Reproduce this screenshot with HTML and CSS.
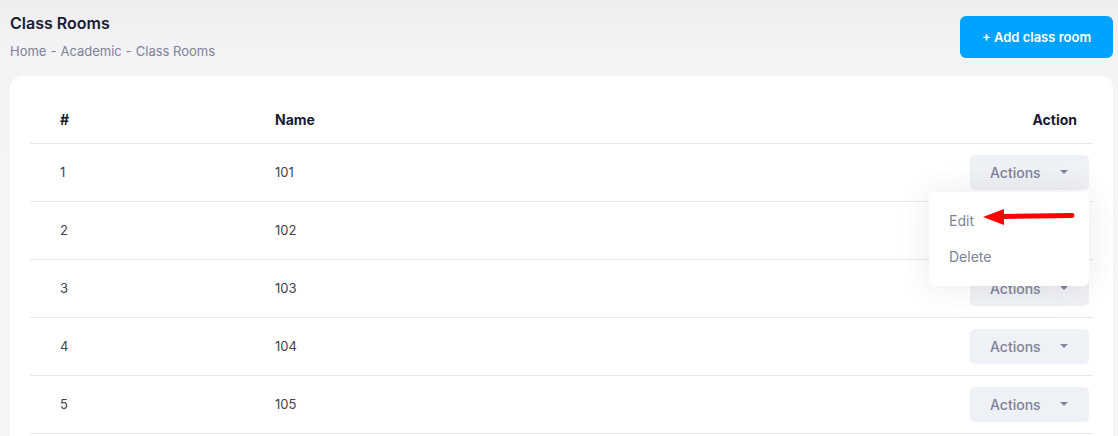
FILE: index.html
```html
<!DOCTYPE html>
<html lang="en">
<head>
<meta charset="utf-8">
<title>Class Rooms</title>
<link rel="stylesheet" href="styles.css">
</head>
<body>
<div class="page">
  <header class="toolbar">
    <div class="heading">
      <h1 class="title">Class Rooms</h1>
      <nav class="crumbs">
        <span>Home</span><span class="sep">-</span><span>Academic</span><span class="sep">-</span><span>Class Rooms</span>
      </nav>
    </div>
    <button class="btn-primary">+ Add class room</button>
  </header>

  <section class="card">
    <table class="grid">
      <thead>
        <tr>
          <th class="col-num">#</th>
          <th class="col-name">Name</th>
          <th class="col-action">Action</th>
        </tr>
      </thead>
      <tbody>
        <tr>
          <td class="col-num">1</td>
          <td class="col-name">101</td>
          <td class="col-action">
            <div class="dd open">
              <button class="btn-actions">Actions <span class="caret"></span></button>
              <div class="menu">
                <div class="menu-item">Edit</div>
                <div class="menu-item">Delete</div>
                <svg class="pointer" width="94" height="18" viewBox="0 0 94 18">
                  <path d="M0 9 L21 1 L21 17 Z" fill="#ff0000"/>
                  <line x1="18" y1="8.5" x2="89" y2="7.5" stroke="#ff0000" stroke-width="5" stroke-linecap="round"/>
                </svg>
              </div>
            </div>
          </td>
        </tr>
        <tr>
          <td class="col-num">2</td>
          <td class="col-name">102</td>
          <td class="col-action"><div class="dd"><button class="btn-actions">Actions <span class="caret"></span></button></div></td>
        </tr>
        <tr>
          <td class="col-num">3</td>
          <td class="col-name">103</td>
          <td class="col-action"><div class="dd"><button class="btn-actions">Actions <span class="caret"></span></button></div></td>
        </tr>
        <tr>
          <td class="col-num">4</td>
          <td class="col-name">104</td>
          <td class="col-action"><div class="dd"><button class="btn-actions">Actions <span class="caret"></span></button></div></td>
        </tr>
        <tr>
          <td class="col-num">5</td>
          <td class="col-name">105</td>
          <td class="col-action"><div class="dd"><button class="btn-actions">Actions <span class="caret"></span></button></div></td>
        </tr>
      </tbody>
    </table>
  </section>
</div>
</body>
</html>
```

FILE: styles.css
```css
* { box-sizing: border-box; }

html, body {
  margin: 0;
  height: 100%;
}

body {
  background: linear-gradient(180deg, #eeeef1 0%, #f4f4f6 60px, #f5f5f8 100%);
  font-family: "Inter", "Open Sans", "DejaVu Sans", sans-serif;
  color: #3f4254;
  overflow: hidden;
}

.page {
  padding: 0 5px 0 10px;
}

.toolbar {
  display: flex;
  justify-content: space-between;
  align-items: flex-start;
  height: 76px;
  padding-top: 12px;
}

.title {
  margin: 0;
  font-size: 16px;
  font-weight: 600;
  line-height: 22px;
  color: #181c32;
}

.crumbs {
  margin-top: 9px;
  font-size: 13px;
  font-weight: 400;
  line-height: 16px;
  color: #7e8299;
  display: flex;
  gap: 4px;
}

.btn-primary {
  margin-top: 4px;
  width: 153px;
  height: 42px;
  border: 0;
  border-radius: 6px;
  background: #00a3ff;
  color: #fff;
  font-family: inherit;
  font-size: 13px;
  font-weight: 600;
  padding: 0;
}

.card {
  background: #fff;
  border-radius: 12px 12px 0 0;
  padding: 20px 20px 0 20px;
  height: 360px;
  overflow: visible;
}

.grid {
  width: 100%;
  border-collapse: collapse;
}

.grid th {
  height: 47px;
  font-size: 14px;
  font-weight: 700;
  color: #181c32;
  text-align: left;
  vertical-align: middle;
  border-bottom: 1px solid #e6e7ec;
}

.grid td {
  height: 58px;
  font-size: 13px;
  color: #3f4254;
  vertical-align: middle;
  border-bottom: 1px solid #e6e7ec;
}

.col-num { padding-left: 30px; width: 245px; }
.col-name { padding-left: 0; }
.grid th.col-action { text-align: right; padding-right: 16px; }
.grid td.col-action { text-align: right; padding-right: 4px; }

.dd {
  position: relative;
  display: inline-block;
}

.btn-actions {
  display: flex;
  align-items: center;
  width: 119px;
  height: 35px;
  padding: 0 0 0 20px;
  border: 0;
  border-radius: 5px;
  background: #eef1f5;
  color: #7e8299;
  font-family: inherit;
  font-size: 14px;
  font-weight: 500;
}

.caret {
  margin-left: 19px;
  width: 0;
  height: 0;
  border-left: 4px solid transparent;
  border-right: 4px solid transparent;
  border-top: 4px solid #7e8299;
}

.menu {
  position: absolute;
  top: 37px;
  right: 0;
  width: 160px;
  height: 94px;
  padding: 11px 0 0 0;
  background: #fff;
  border-radius: 6px;
  box-shadow: 0 0 30px rgba(82, 63, 105, 0.12);
  text-align: left;
  z-index: 5;
}

.menu-item {
  height: 36px;
  line-height: 36px;
  padding-left: 20px;
  font-size: 14px;
  color: #7e8299;
}

.pointer {
  position: absolute;
  left: 54px;
  top: 16px;
}
```
